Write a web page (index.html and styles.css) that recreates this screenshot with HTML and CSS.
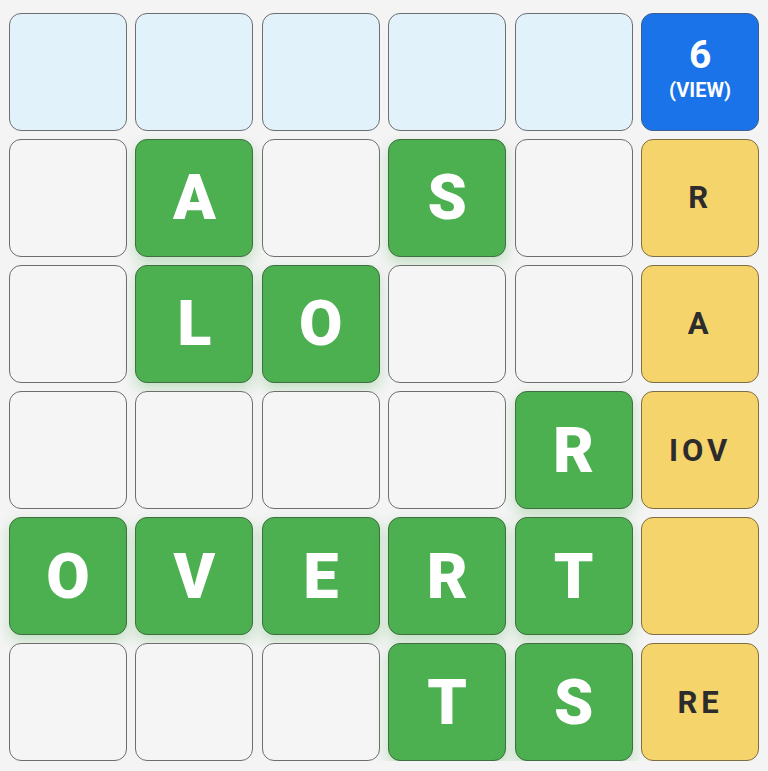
FILE: index.html
```html
<!DOCTYPE html>
<html>
<head>
<meta charset="utf-8">
<link rel="stylesheet" href="styles.css">
</head>
<body>
<div class="board">
  <div class="cell blue"></div>
  <div class="cell blue"></div>
  <div class="cell blue"></div>
  <div class="cell blue"></div>
  <div class="cell blue"></div>
  <div class="cell view"><span class="num">6</span><span class="lbl">(VIEW)</span></div>

  <div class="cell"></div>
  <div class="cell green">A</div>
  <div class="cell"></div>
  <div class="cell green">S</div>
  <div class="cell"></div>
  <div class="cell yellow">R</div>

  <div class="cell"></div>
  <div class="cell green">L</div>
  <div class="cell green">O</div>
  <div class="cell"></div>
  <div class="cell"></div>
  <div class="cell yellow">A</div>

  <div class="cell"></div>
  <div class="cell"></div>
  <div class="cell"></div>
  <div class="cell"></div>
  <div class="cell green">R</div>
  <div class="cell yellow">IOV</div>

  <div class="cell green">O</div>
  <div class="cell green">V</div>
  <div class="cell green">E</div>
  <div class="cell green">R</div>
  <div class="cell green">T</div>
  <div class="cell yellow"></div>

  <div class="cell"></div>
  <div class="cell"></div>
  <div class="cell"></div>
  <div class="cell green">T</div>
  <div class="cell green">S</div>
  <div class="cell yellow">RE</div>
</div>
</body>
</html>
```
FILE: styles.css
```css
html, body {
  margin: 0;
  padding: 0;
  background: #f4f4f4;
}
body {
  font-family: Roboto, "Liberation Sans", sans-serif;
}
.board {
  display: grid;
  grid-template-columns: repeat(6, 1fr);
  grid-auto-rows: 117.5px;
  gap: 8.6px;
  padding: 13px 9px 0 9px;
  width: 750px;
}
.cell {
  box-sizing: border-box;
  border: 1px solid #6e6e6e;
  border-radius: 12px;
  background: #f5f5f5;
  display: flex;
  align-items: center;
  justify-content: center;
  font-weight: 700;
}
.blue {
  background: #e1f2fb;
}
.green {
  background: #4caf50;
  border-color: #3f6f41;
  color: #fff;
  font-size: 63px;
  font-weight: 900;
  box-shadow: 0 6px 14px rgba(76, 175, 80, 0.3);
}
.yellow {
  background: #f5d46b;
  border-color: #7d6f45;
  color: #2c2c2c;
  font-size: 31px;
  letter-spacing: 4px;
}
.view {
  background: #1a73e8;
  border-color: #3c5f8d;
  color: #fff;
  flex-direction: column;
  line-height: 1;
  padding-bottom: 7px;
}
.view .num {
  font-size: 39px;
}
.view .lbl {
  font-size: 20px;
  margin-top: 5px;
}
```
